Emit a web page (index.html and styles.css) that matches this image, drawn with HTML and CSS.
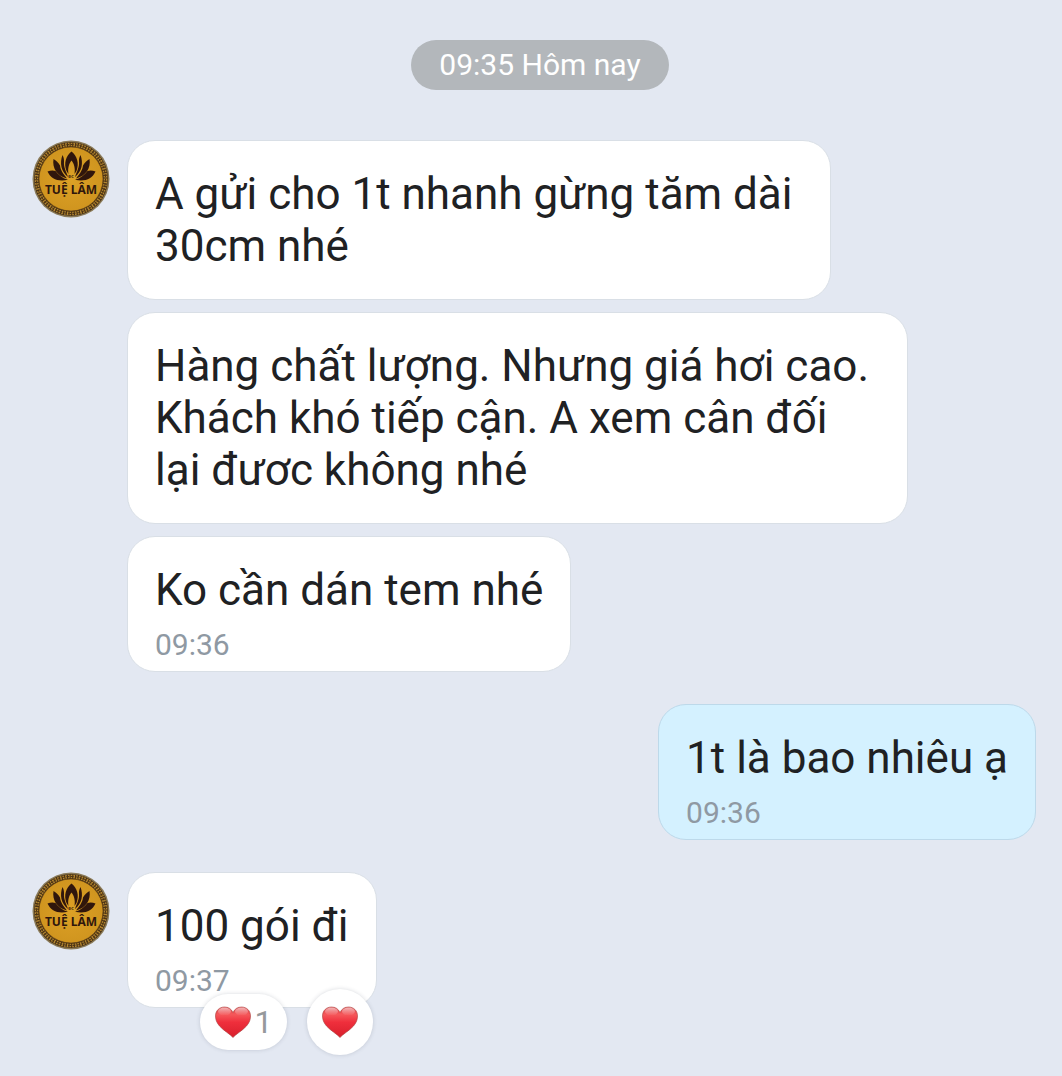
FILE: index.html
```html
<!DOCTYPE html>
<html lang="vi">
<head>
    <meta charset="UTF-8">
    <meta name="viewport" content="width=device-width, initial-scale=1">
    <title>Tuệ Lâm</title>
    <link rel="stylesheet" href="styles.css">
</head>
<body>

    <!-- shared drawings -->
    <svg class="defs" aria-hidden="true">
        <defs>
            <linearGradient id="heartFill" x1="0" y1="0" x2="0" y2="1">
                <stop offset="0" stop-color="#e0474a"/>
                <stop offset="0.25" stop-color="#f5575a"/>
                <stop offset="0.5" stop-color="#ef2f3c"/>
                <stop offset="1" stop-color="#d81f2c"/>
            </linearGradient>
            <linearGradient id="heartShine" x1="0" y1="0" x2="0" y2="1">
                <stop offset="0" stop-color="#fff" stop-opacity="0.6"/>
                <stop offset="1" stop-color="#fff" stop-opacity="0"/>
            </linearGradient>
            <radialGradient id="gold">
                <stop offset="0" stop-color="#dda126"/>
                <stop offset="1" stop-color="#d0951f"/>
            </radialGradient>
            <symbol id="heart" viewBox="0 0 36 32">
                <path d="M18 31.5C15 28 9 25 4.500 20C1.500 16.500 0.500 13.500 0.500 10C0.500 4.500 4.500 1 9.500 1C13.500 1 16.500 3 18 6.500C19.500 3 22.500 1 26.500 1C31.500 1 35.500 4.500 35.500 10C35.500 13.500 34.500 16.500 31.500 20C27 25 21 28 18 31.500Z" fill="url(#heartFill)" stroke="#a8403c" stroke-width="0.6"/>
                <ellipse cx="9.500" cy="5.500" rx="6.500" ry="4" fill="url(#heartShine)"/>
                <ellipse cx="26.500" cy="5.500" rx="6.500" ry="4" fill="url(#heartShine)"/>
            </symbol>
            <symbol id="logo" viewBox="0 0 78 78">
                <circle cx="39" cy="39" r="38.500" fill="#8a7a58"/>
                <circle cx="39" cy="39" r="37" fill="#4a3214"/>
                <circle cx="39" cy="39" r="34.500" fill="none" stroke="#b28530" stroke-width="3.6" stroke-dasharray="1.6 1.1"/>
                <circle cx="39" cy="39" r="34.500" fill="none" stroke="#4a3214" stroke-width="1" stroke-dasharray="3 1.5"/>
                <circle cx="39" cy="39" r="32" fill="url(#gold)" stroke="#5c3d12" stroke-width="0.6"/>
                <g fill="#30160c">
                    <path d="M39.500 11.500C34 16 31.500 23 34.500 31L36.500 34C35.500 28 37 23.500 39.500 20.500C42 23.500 43.500 28 42.500 34L44.500 31C47.500 23 45 16 39.500 11.500Z"/>
                    <path d="M30.500 15C27.500 23 29 31.500 36 37C34 31 31.500 27 32 21.500C32.200 19 31.500 17 30.500 15Z"/>
                    <path d="M48.500 15C51.500 23 50 31.500 43 37C45 31 47.500 27 47 21.500C46.800 19 47.500 17 48.500 15Z"/>
                    <path d="M21.500 19C20 28 25 36 35 38.500C31.500 34 28.500 30.500 28 25.500C26.500 22.500 24 20.500 21.500 19Z"/>
                    <path d="M57.500 19C59 28 54 36 44 38.500C47.500 34 50.500 30.500 51 25.500C52.500 22.500 55 20.500 57.500 19Z"/>
                    <path d="M15.500 31.500C19 39 26 42 36 39.800C30 38 26 34.500 23.500 31C21 30 18 30.500 15.500 31.500Z"/>
                    <path d="M63.500 31.500C60 39 53 42 43 39.800C49 38 53 34.500 55.500 31C58 30 61 30.500 63.500 31.500Z"/>
                </g>
                <text class="logo-small" x="39" y="38">ĐC</text>
                <text class="logo-name" x="39" y="54">TUỆ LÂM</text>
            </symbol>
        </defs>
    </svg>

    <main class="chat">
        <div class="date-row"><time class="date">09:35 Hôm nay</time></div>

        <section class="group received">
            <svg class="avatar" role="img" aria-label="Tuệ Lâm"><use href="#logo"/></svg>
            <div class="messages">
                <div class="bubble">
                    <p class="text">A gửi cho 1t nhanh gừng tăm dài <br>30cm nhé</p>
                </div>
                <div class="bubble">
                    <p class="text">Hàng chất lượng. Nhưng giá hơi cao. <br>Khách khó tiếp cận. A xem cân đối <br>lại đươc không nhé</p>
                </div>
                <div class="bubble timed">
                    <p class="text">Ko cần dán tem nhé</p>
                    <time class="time">09:36</time>
                </div>
            </div>
        </section>

        <section class="group sent">
            <div class="messages">
                <div class="bubble timed">
                    <p class="text">1t là bao nhiêu ạ</p>
                    <time class="time">09:36</time>
                </div>
            </div>
        </section>

        <section class="group received">
            <svg class="avatar" role="img" aria-label="Tuệ Lâm"><use href="#logo"/></svg>
            <div class="messages">
                <div class="bubble timed">
                    <p class="text">100 gói đi</p>
                    <time class="time">09:37</time>
                    <div class="reactions">
                        <button class="reaction count" type="button"><svg class="heart" aria-hidden="true"><use href="#heart"/></svg>1</button>
                        <button class="reaction add" type="button" aria-label="Thả tim"><svg class="heart" aria-hidden="true"><use href="#heart"/></svg></button>
                    </div>
                </div>
            </div>
        </section>
    </main>

</body>
</html>
```
FILE: styles.css
```css
* {
    box-sizing: border-box;
}

body {
    margin: 0;
    background-color: #e3e8f2;
    color: #202123;
    font-family: Roboto, "Noto Sans", sans-serif;
}

.defs {
    position: absolute;
    width: 0;
    height: 0;
}

.chat {
    display: flex;
    flex-direction: column;
    gap: 32px;
    padding: 40px 26px 68px 32px;
}

.date-row {
    display: flex;
    justify-content: center;
    padding-left: 12px;
    margin-bottom: 18px;
}

.date {
    padding: 0 28px;
    border-radius: 25px;
    background-color: #b3b7bb;
    color: white;
    font-size: 30px;
    line-height: 50px;
}

.group {
    display: flex;
    align-items: flex-start;
    gap: 17px;
}

.sent {
    justify-content: flex-end;
}

.avatar {
    flex: none;
    width: 78px;
    height: 78px;
}

.logo-name,
.logo-small {
    fill: #30160c;
    font-family: "Noto Sans", sans-serif;
    font-weight: bold;
    text-anchor: middle;
}

.logo-name {
    font-size: 12px;
}

.logo-small {
    font-size: 4px;
}

.messages {
    display: flex;
    flex-direction: column;
    align-items: flex-start;
    gap: 12px;
}

.bubble {
    position: relative;
    padding: 27px;
    border: 1px solid #d9dfe6;
    border-radius: 28px;
    background-color: white;
}

.sent .bubble {
    border-color: #bdd9ea;
    background-color: #d4f1ff;
}

.bubble.timed {
    padding-bottom: 9px;
}

.text {
    margin: 0;
    font-size: 44px;
    line-height: 52px;
    white-space: pre;
}

.time {
    display: block;
    margin-top: 12px;
    color: #8f99a3;
    font-size: 30px;
    line-height: 34px;
}

/* hangs over the lower edge of the bubble */
.reactions {
    position: absolute;
    bottom: -48px;
    left: 72px;
    display: flex;
    align-items: center;
    gap: 20px;
}

.reaction {
    display: flex;
    align-items: center;
    justify-content: center;
    gap: 4px;
    border: 0;
    background-color: white;
    box-shadow: 0 0 4px rgba(60, 70, 90, 0.2);
    color: #96999c;
    font: 32px Roboto, sans-serif;
    cursor: pointer;
}

.count {
    width: 87px;
    height: 56px;
    padding: 0;
    border-radius: 28px;
}

.add {
    width: 66px;
    height: 66px;
    padding: 0;
    border-radius: 50%;
}

.heart {
    width: 36px;
    height: 32px;
}
```
